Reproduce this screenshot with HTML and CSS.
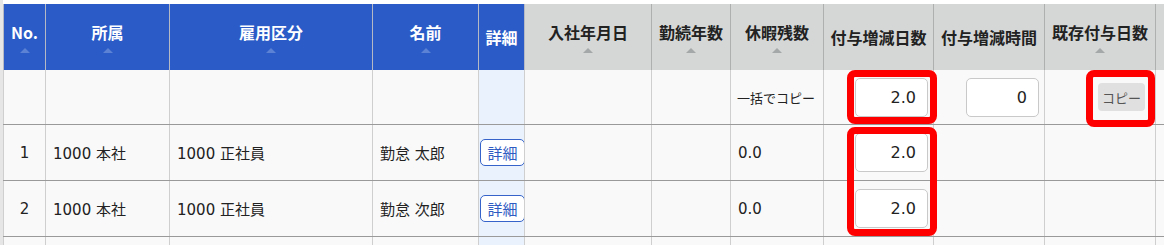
FILE: index.html
```html
<!DOCTYPE html>
<html lang="ja">
<head>
<meta charset="utf-8">
<title>付与増減</title>
<link rel="stylesheet" href="styles.css">
</head>
<body>
<div class="page">
  <table class="grid">
    <colgroup>
      <col class="c-no"><col class="c-dept"><col class="c-emp"><col class="c-name"><col class="c-detail">
      <col class="c-join"><col class="c-years"><col class="c-rest"><col class="c-days"><col class="c-hours">
      <col class="c-exist"><col class="c-next">
    </colgroup>
    <thead>
      <tr class="head">
        <th class="blue"><span class="lbl">No.</span><span class="sort"></span></th>
        <th class="blue"><span class="lbl">所属</span><span class="sort"></span></th>
        <th class="blue"><span class="lbl">雇用区分</span><span class="sort"></span></th>
        <th class="blue"><span class="lbl">名前</span><span class="sort"></span></th>
        <th class="blue"><span class="lbl">詳細</span></th>
        <th class="gray"><span class="lbl">入社年月日</span><span class="sort"></span></th>
        <th class="gray"><span class="lbl">勤続年数</span><span class="sort"></span></th>
        <th class="gray"><span class="lbl">休暇残数</span><span class="sort"></span></th>
        <th class="gray"><span class="lbl">付与増減日数</span></th>
        <th class="gray"><span class="lbl">付与増減時間</span></th>
        <th class="gray"><span class="lbl">既存付与日数</span><span class="sort"></span></th>
        <th class="gray"><span class="lbl">既存付与時間</span><span class="sort"></span></th>
      </tr>
    </thead>
    <tbody>
      <tr class="filter">
        <td></td><td></td><td></td><td></td><td class="dcol"></td>
        <td></td><td></td>
        <td class="note">一括でコピー</td>
        <td class="inp"><input class="num" type="text" value="2.0"></td>
        <td class="inp"><input class="num" type="text" value="0"></td>
        <td class="btncell"><button class="copy" type="button">コピー</button></td>
        <td></td>
      </tr>
      <tr class="row">
        <td class="no">1</td><td>1000 本社</td><td>1000 正社員</td><td>勤怠 太郎</td>
        <td class="dcol det"><button class="detail" type="button">詳細</button></td>
        <td></td><td></td><td>0.0</td>
        <td class="inp"><input class="num" type="text" value="2.0"></td>
        <td></td><td></td><td></td>
      </tr>
      <tr class="row">
        <td class="no">2</td><td>1000 本社</td><td>1000 正社員</td><td>勤怠 次郎</td>
        <td class="dcol det"><button class="detail" type="button">詳細</button></td>
        <td></td><td></td><td>0.0</td>
        <td class="inp"><input class="num" type="text" value="2.0"></td>
        <td></td><td></td><td></td>
      </tr>
      <tr class="row">
        <td class="no"></td><td></td><td></td><td></td>
        <td class="dcol det"></td>
        <td></td><td></td><td></td>
        <td class="inp"><input class="num" type="text" value=""></td>
        <td></td><td></td><td></td>
      </tr>
    </tbody>
  </table>
  <div class="mark mark-bulk"></div>
  <div class="mark mark-rows"></div>
  <div class="mark mark-copy"></div>
</div>
</body>
</html>
```
FILE: styles.css
```css
html, body {
  margin: 0;
  padding: 0;
  background: #ffffff;
  overflow: hidden;
}
body {
  width: 1164px;
  height: 245px;
  font-family: "DejaVu Sans", "Noto Sans CJK JP", sans-serif;
  color: #222;
}
.page {
  position: relative;
  padding-top: 4px;
  border-left: 3px solid #e6e6e6;
  width: 1400px;
  height: 260px;
  background: #fff;
}
.grid {
  border-collapse: collapse;
  table-layout: fixed;
  width: 1302px;
  border-left: 1px solid #b8b8b8;
}
.c-no { width: 42px; }
.c-dept { width: 124px; }
.c-emp { width: 203px; }
.c-name { width: 106px; }
.c-detail { width: 46px; }
.c-join { width: 127px; }
.c-years { width: 79px; }
.c-rest { width: 93px; }
.c-days { width: 110px; }
.c-hours { width: 111px; }
.c-exist { width: 111px; }
.c-next { width: 150px; }

.head th {
  height: 66px;
  padding: 0;
  text-align: center;
  vertical-align: middle;
  font-family: "Noto Sans CJK JP", "Noto Sans", sans-serif;
  font-size: 16px;
  font-weight: bold;
  line-height: 20px;
  white-space: nowrap;
  overflow: hidden;
}
.head th.blue {
  background: #2a5bc7;
  color: #fff;
  border-left: 1px solid #b4b9c4;
  border-right: 1px solid #b4b9c4;
}
.head th.gray {
  background: #d5d7d7;
  color: #222;
  border-left: 1px solid #aeb0b0;
  border-right: 1px solid #aeb0b0;
}
.lbl { display: block; }
.sort {
  display: block;
  width: 0;
  height: 0;
  margin: 6px auto 0;
  border-left: 5px solid transparent;
  border-right: 5px solid transparent;
  border-bottom: 5px solid #a5a8a8;
}
.blue .sort { border-bottom-color: #5b82d4; }

tbody td {
  background: #f9f9f9;
  border-left: 1px solid #cfcfcf;
  border-right: 1px solid #cfcfcf;
  padding: 0 7px;
  font-size: 15px;
  white-space: nowrap;
  overflow: hidden;
}
tbody td.dcol { background: #eaf2fd; }
.filter td { height: 54px; border-bottom: 1px solid #9a9a9a; }
.row td { height: 55px; border-bottom: 1px solid #9a9a9a; }
td.no { text-align: center; padding: 0; }
td.note { font-size: 13px; padding-left: 6px; }
td.inp { text-align: right; padding: 0 5px 0 0; }
td.btncell { text-align: right; padding: 0 10px 0 0; }
td.det { padding: 0 0 0 1px; }

.num {
  box-sizing: border-box;
  width: 73px;
  height: 39px;
  border: 1px solid #c9c9c9;
  border-radius: 5px;
  background: #fff;
  text-align: right;
  padding: 0 11px 0 0;
  font-family: "DejaVu Sans", "Noto Sans CJK JP", sans-serif;
  font-size: 16px;
  color: #222;
  vertical-align: middle;
}
.copy {
  box-sizing: border-box;
  width: 47px;
  height: 28px;
  border: 0;
  border-radius: 4px;
  background: #e0e0e0;
  color: #555;
  font-family: "Noto Sans CJK JP", "Noto Sans", sans-serif;
  font-size: 13px;
  padding: 0;
  vertical-align: middle;
}
.detail {
  box-sizing: border-box;
  width: 45px;
  height: 27px;
  border: 1px solid #3563c9;
  border-radius: 5px;
  background: #fff;
  color: #2f5cc2;
  font-family: "Noto Sans CJK JP", "Noto Sans", sans-serif;
  font-size: 15px;
  padding: 0;
  vertical-align: middle;
}

.mark {
  position: absolute;
  box-sizing: border-box;
  border: 7px solid #ff0000;
  border-radius: 8px;
}
.mark-bulk { left: 844px; top: 70px; width: 90px; height: 54px; }
.mark-rows { left: 844px; top: 127px; width: 90px; height: 109px; }
.mark-copy { left: 1083px; top: 70px; width: 69px; height: 57px; }
```
